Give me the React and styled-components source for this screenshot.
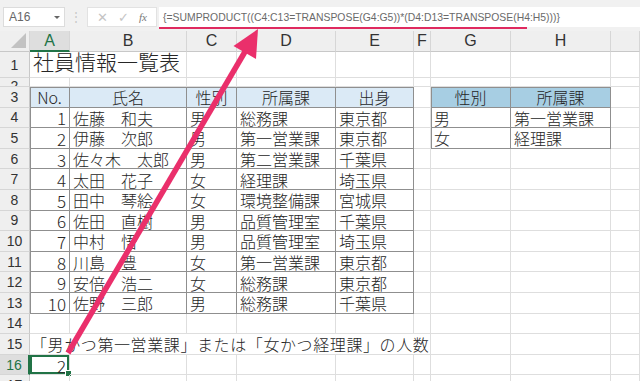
import React from 'react'
import styled, { createGlobalStyle, css } from 'styled-components'

const Global = createGlobalStyle`
  html, body { margin: 0; padding: 0; background: #fff; overflow: hidden; }
  body { width: 640px; height: 381px; font-family: "Noto Sans CJK JP", "Liberation Sans", sans-serif; }
`

const Page = styled.div`
  position: relative;
  width: 640px;
  height: 381px;
  overflow: hidden;
`

const Toolbar = styled.div`
  height: 31px;
  background: #f1f1f1;
  display: flex;
  align-items: flex-start;
  padding-top: 7px;
  box-sizing: border-box;
`

const NameBox = styled.div`
  margin-left: 3px;
  width: 62px;
  height: 20px;
  box-sizing: border-box;
  background: #fff;
  border: 1px solid #dcdcdc;
  display: flex;
  align-items: center;
  justify-content: space-between;
  padding: 0 4px 0 5px;
  font: 12px "Liberation Sans", sans-serif;
  color: #666;
`

const Caret = styled.span`
  width: 0;
  height: 0;
  border-left: 3px solid transparent;
  border-right: 3px solid transparent;
  border-top: 3px solid #666;
`

const Dots = styled.div`
  width: 22px;
  text-align: center;
  color: #c8c8c8;
  font: 12px "Liberation Sans", sans-serif;
  line-height: 20px;
`

const ActionBox = styled.div`
  width: 70px;
  height: 20px;
  box-sizing: border-box;
  background: #fff;
  border: 1px solid #e2e2e2;
  display: flex;
  align-items: center;
  justify-content: space-around;
  padding: 0 4px;
`

const Action = styled.span`
  font: ${p => (p.$fx ? 'italic 11px "Liberation Serif", serif' : '13px "Liberation Sans", sans-serif')};
  color: ${p => (p.$fx ? '#777' : '#c4c4c4')};
`

const FormulaBox = styled.div`
  margin-left: 2px;
  flex: 1;
  height: 20px;
  background: #fff;
  position: relative;
  display: flex;
  align-items: center;
  padding-left: 4px;
  font: 10.4px "Liberation Sans", sans-serif;
  color: #6a6a6a;
  white-space: nowrap;
`

const Underline = styled.span`
  position: absolute;
  left: 0;
  top: 20px;
  width: 368px;
  height: 2px;
  background: #df2a5f;
`

const Sheet = styled.div`
  display: grid;
  grid-template-columns: 30px 40px 117px 50px 99px 78px 17px 80px 100px 1fr;
  grid-template-rows: 21px 26px 9px repeat(15, 20.6px);
`

const ColHead = styled.div`
  background: ${p => (p.$active ? '#dedede' : '#efefef')};
  color: ${p => (p.$active ? '#217346' : '#333')};
  border-right: 1px solid #d6d6d6;
  border-bottom: ${p => (p.$active ? '2px solid #217346' : '1px solid #c8c8c8')};
  box-sizing: border-box;
  display: flex;
  align-items: center;
  justify-content: center;
  font: 16px "Liberation Sans", sans-serif;
`

const Corner = styled(ColHead)`
  align-items: flex-end;
  justify-content: flex-end;
  padding: 0 3px 3px 0;
  &::before {
    content: '';
    width: 0;
    height: 0;
    border-left: 15px solid transparent;
    border-bottom: 15px solid #c2c2c2;
  }
`

const RowHead = styled.div`
  background: ${p => (p.$active ? '#dedede' : '#efefef')};
  color: ${p => (p.$active ? '#217346' : '#333')};
  border-right: ${p => (p.$active ? '2px solid #217346' : '1px solid #c8c8c8')};
  border-bottom: 1px solid #d6d6d6;
  box-sizing: border-box;
  display: flex;
  align-items: center;
  justify-content: center;
  overflow: hidden;
  font: 14px "Liberation Sans", sans-serif;
  line-height: 1;
  ${p => p.$clip && css`align-items: flex-start; padding-top: 1px;`}
`

const Cell = styled.div`
  position: relative;
  box-sizing: border-box;
  border-right: 1px solid ${p => (p.$boxed ? '#8f8f8f' : '#dedede')};
  border-bottom: 1px solid ${p => (p.$boxed ? '#8f8f8f' : '#dedede')};
  background: ${p => p.$fill || 'transparent'};
  display: flex;
  align-items: center;
  justify-content: ${p => (p.$align === 'center' ? 'center' : p.$align === 'right' ? 'flex-end' : 'flex-start')};
  padding: 1px 3px 0;
  font-size: ${p => (p.$num ? '17px' : '16px')};
  font-weight: 300;
  color: #262626;
  white-space: nowrap;
  ${p => p.$span && css`grid-column: span ${p.$span};`}
  ${p => (p.$top || p.$left) && css`
    box-shadow: ${[p.$top && 'inset 0 1px 0 #8f8f8f', p.$left && 'inset 1px 0 0 #8f8f8f'].filter(Boolean).join(', ')};
  `}
  ${p => p.$selected && css`
    box-shadow: inset 0 0 0 2px #217346;
    &::after {
      content: '';
      position: absolute;
      right: -3px;
      bottom: -3px;
      width: 5px;
      height: 5px;
      background: #217346;
      border: 1px solid #fff;
    }
  `}
`

const Title = styled(Cell)`
  font-size: 21px;
  padding: 0 0 1px 3px;
  align-items: flex-end;
`

const Note = styled(Cell)`
  padding-left: 1px;
  letter-spacing: 0.6px;
`

const Arrow = styled.svg`
  position: absolute;
  left: 0;
  top: 0;
  pointer-events: none;
`

const cols = ['A', 'B', 'C', 'D', 'E', 'F', 'G', 'H', '']

const staff = [
  ['1', '佐藤　和夫', '男', '総務課', '東京都'],
  ['2', '伊藤　次郎', '男', '第一営業課', '東京都'],
  ['3', '佐々木　太郎', '男', '第二営業課', '千葉県'],
  ['4', '太田　花子', '女', '経理課', '埼玉県'],
  ['5', '田中　琴絵', '女', '環境整備課', '宮城県'],
  ['6', '佐田　直樹', '男', '品質管理室', '千葉県'],
  ['7', '中村　悟', '男', '品質管理室', '埼玉県'],
  ['8', '川島　豊', '女', '第一営業課', '東京都'],
  ['9', '安倍　浩二', '女', '総務課', '東京都'],
  ['10', '佐野　三郎', '男', '総務課', '千葉県'],
]

const lookup = [
  ['性別', '所属課'],
  ['男', '第一営業課'],
  ['女', '経理課'],
]

const HEAD_BLUE = '#dbeaf6'
const HEAD_DARK = '#a7cee3'

function blank(key, n = 1) {
  return Array.from({ length: n }, (_, i) => <Cell key={`${key}-${i}`} />)
}

function tableRow(r, values, header) {
  const cells = values.map((v, i) => (
    <Cell
      key={`t${r}-${i}`}
      $boxed
      $top={header}
      $left={i === 0}
      $num={!header && i === 0}
      $fill={header ? HEAD_BLUE : undefined}
      $align={header ? 'center' : i === 0 ? 'right' : 'left'}
    >
      {v}
    </Cell>
  ))
  const right = lookup[r - 3]
  return [
    ...cells,
    ...blank(`f${r}`),
    ...(right
      ? right.map((v, i) => (
          <Cell
            key={`g${r}-${i}`}
            $boxed
            $top={r === 3}
            $left={i === 0}
            $fill={r === 3 ? HEAD_DARK : undefined}
            $align={r === 3 ? 'center' : 'left'}
          >
            {v}
          </Cell>
        ))
      : blank(`g${r}`, 2)),
    ...blank(`i${r}`),
  ]
}

export default function App() {
  const rows = []
  for (let r = 1; r <= 17; r++) {
    rows.push(
      <RowHead key={`rh${r}`} $active={r === 16} $clip={r === 2}>
        {r}
      </RowHead>
    )
    if (r === 1) {
      rows.push(<Title key="title" $span={2}>社員情報一覧表</Title>, ...blank('r1', 7))
    } else if (r === 2 || r === 14 || r === 17) {
      rows.push(...blank(`r${r}`, 9))
    } else if (r === 3) {
      rows.push(...tableRow(3, ['No.', '氏名', '性別', '所属課', '出身'], true))
    } else if (r <= 13) {
      rows.push(...tableRow(r, staff[r - 4], false))
    } else if (r === 15) {
      rows.push(
        <Note key="note" $span={6}>
          「男かつ第一営業課」または「女かつ経理課」の人数
        </Note>,
        ...blank('r15', 3)
      )
    } else if (r === 16) {
      rows.push(
        <Cell key="ans" $selected $num $align="right">
          2
        </Cell>,
        ...blank('r16', 8)
      )
    }
  }

  return (
    <Page>
      <Global />
      <Toolbar>
        <NameBox>
          A16
          <Caret />
        </NameBox>
        <Dots>⋮</Dots>
        <ActionBox>
          <Action>✕</Action>
          <Action>✓</Action>
          <Action $fx>fx</Action>
        </ActionBox>
        <FormulaBox>
          {'{=SUMPRODUCT((C4:C13=TRANSPOSE(G4:G5))*(D4:D13=TRANSPOSE(H4:H5)))}'}
          <Underline />
        </FormulaBox>
      </Toolbar>
      <Sheet>
        <Corner />
        {cols.map((c, i) => (
          <ColHead key={`c${i}`} $active={c === 'A'}>
            {c}
          </ColHead>
        ))}
        {rows}
      </Sheet>
      <Arrow width="640" height="381" viewBox="0 0 640 381">
        <line x1="68" y1="353" x2="246" y2="50" stroke="#ea2f6b" strokeWidth="5.5" />
        <polygon points="258,29 233.5,46 256,59" fill="#ea2f6b" />
      </Arrow>
    </Page>
  )
}
